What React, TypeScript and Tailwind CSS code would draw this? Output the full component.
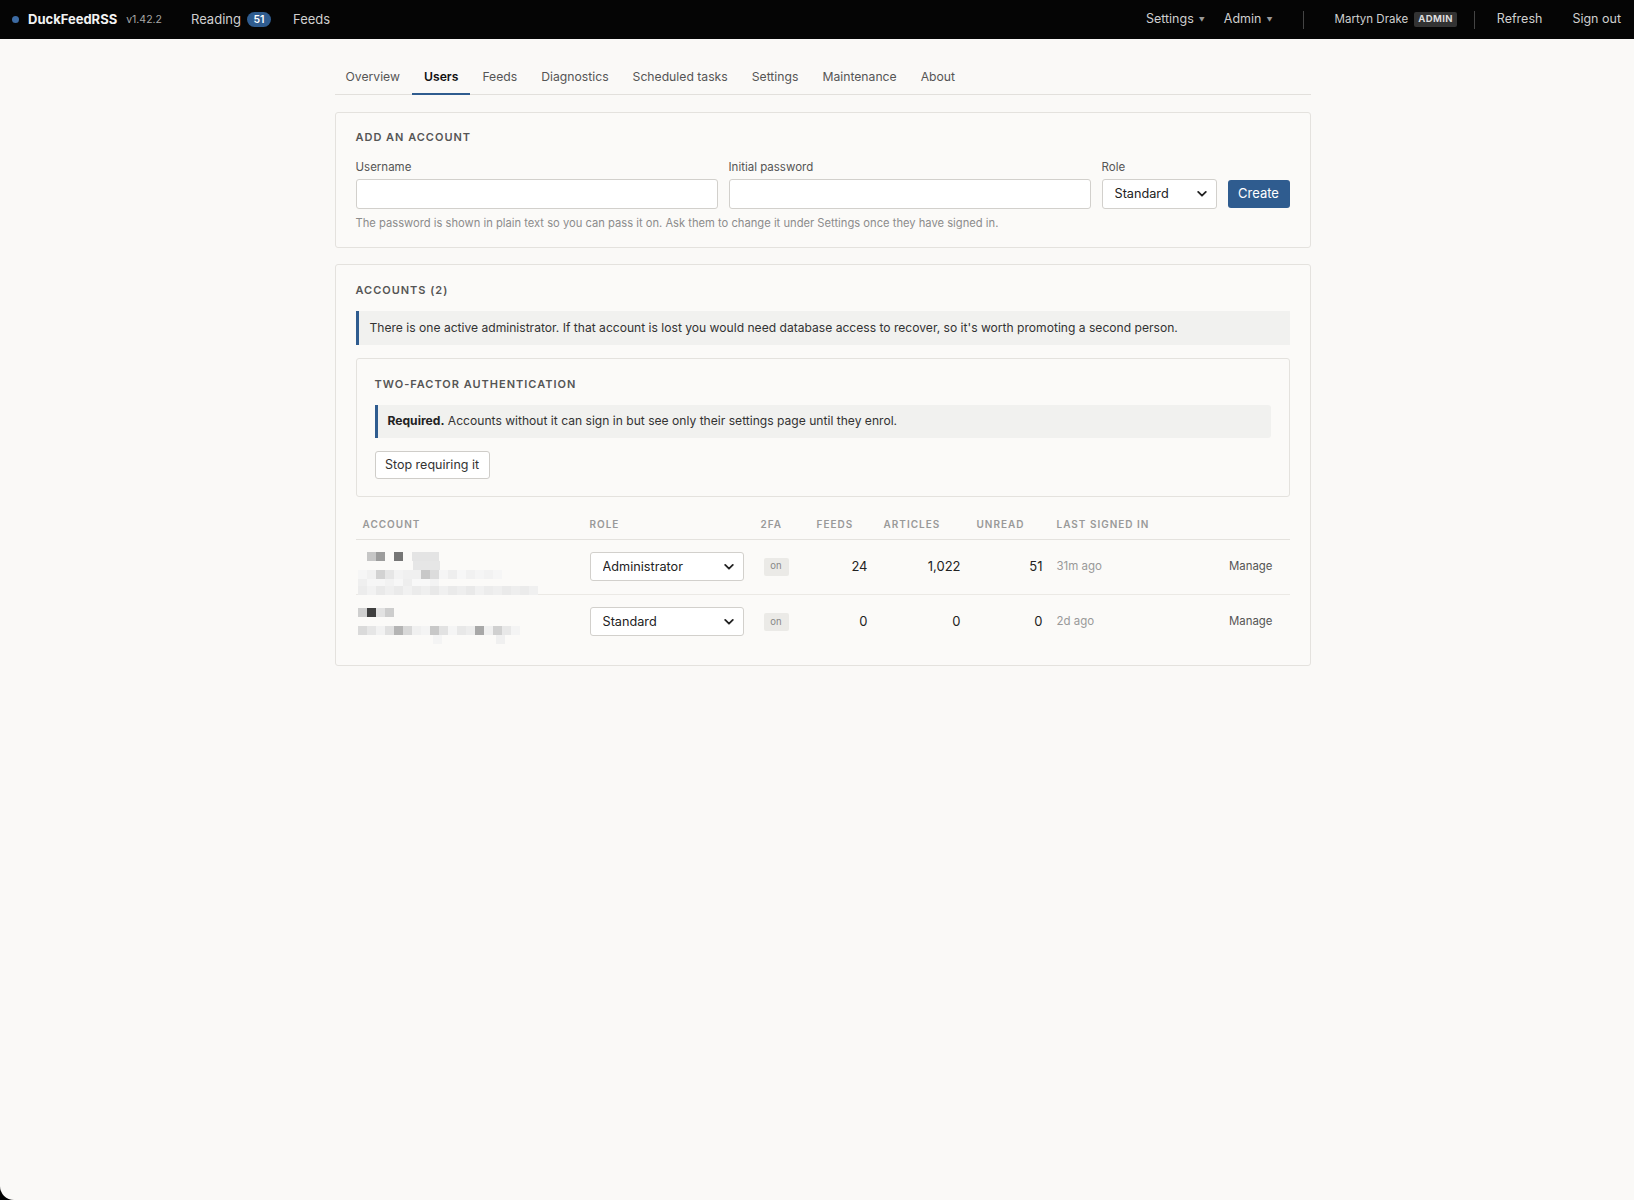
import React from "react";

const Chevron = () => (
  <svg width="10" height="7" viewBox="0 0 10 7" className="pointer-events-none absolute right-[10px] top-1/2 -translate-y-1/2">
    <path d="M1.2 1.4 L5 5.2 L8.8 1.4" fill="none" stroke="#222" strokeWidth="1.8" strokeLinecap="round" strokeLinejoin="round" />
  </svg>
);

const Select = ({ value, options, className }: { value: string; options: string[]; className: string }) => (
  <div className={"relative " + className}>
    <select
      defaultValue={value}
      className="h-full w-full appearance-none rounded-[3px] border border-[#d2d0cc] bg-white pl-[12px] pr-7 text-[12.7px] text-[#222] outline-none"
    >
      {options.map((o) => (
        <option key={o}>{o}</option>
      ))}
    </select>
    <Chevron />
  </div>
);

type Cell = [number, string];
const Mosaic = ({ lines }: { lines: { x: number; y: number; cells: Cell[] }[] }) => (
  <div className="relative h-full w-full">
    {lines.map((ln, i) => (
      <div key={i} className="absolute flex" style={{ left: ln.x, top: ln.y }}>
        {ln.cells.map(([w, c], j) => (
          <div key={j} style={{ width: w * 9, height: 9, background: c }} />
        ))}
      </div>
    ))}
  </div>
);

const row1Lines = [
  { x: 11, y: 12, cells: [[1, "#c6c6c6"], [1, "#9c9c9c"], [1, "transparent"], [1, "#767676"], [1, "transparent"], [3, "#e4e4e4"]] as Cell[] },
  { x: 57, y: 21, cells: [[3, "#e6e6e6"]] as Cell[] },
  { x: 2, y: 30, cells: [[1, "#f6f6f6"], [1, "#f1f1f1"], [1, "#d2d2d2"], [1, "#e6e6e6"], [1, "#f3f3f3"], [2, "#f0f0f0"], [1, "#c8c8c8"], [1, "#dcdcdc"], [1, "#f5f5f5"], [1, "#eeeeee"], [1, "#f7f7f7"], [1, "#f1f1f1"], [1, "#f5f5f5"], [1, "#f2f2f2"], [1, "#f6f6f6"]] as Cell[] },
  { x: 2, y: 39, cells: [[1, "#efefef"], [2, "#f6f6f6"], [1, "#f2f2f2"], [1, "#f7f7f7"], [1, "#eeeeee"], [2, "#f8f8f8"], [1, "#f3f3f3"]] as Cell[] },
  { x: 2, y: 46, cells: [[1, "#ececec"], [1, "#f2f2f2"], [1, "#e9e9e9"], [1, "#efefef"], [1, "#eaeaea"], [1, "#f1f1f1"], [1, "#ebebeb"], [1, "#efefef"], [1, "#e8e8e8"], [1, "#f0f0f0"], [1, "#eaeaea"], [1, "#eeeeee"], [1, "#e9e9e9"], [1, "#f1f1f1"], [1, "#ececec"], [1, "#efefef"], [1, "#eaeaea"], [1, "#eeeeee"], [1, "#ebebeb"], [1, "#f0f0f0"]] as Cell[] },
];

const row2Lines = [
  { x: 2, y: 13, cells: [[1, "#cfcfcf"], [1, "#3f3f3f"], [1, "#e2e2e2"], [1, "#cdcdcd"]] as Cell[] },
  { x: 2, y: 31, cells: [[1, "#dadada"], [1, "#e6e6e6"], [1, "#f2f2f2"], [1, "#e0e0e0"], [1, "#b4b4b4"], [1, "#d8d8d8"], [1, "#f0f0f0"], [1, "#f4f4f4"], [1, "#c8c8c8"], [1, "#e2e2e2"], [1, "#f5f5f5"], [1, "#e8e8e8"], [1, "#ededed"], [1, "#a8a8a8"], [1, "#f0f0f0"], [1, "#d0d0d0"], [1, "#e8e8e8"], [1, "#f4f4f4"]] as Cell[] },
  { x: 77, y: 40, cells: [[1, "#f4f4f4"], [6, "transparent"], [1, "#f0f0f0"]] as Cell[] },
];

const accounts = [
  { role: "Administrator", feeds: "24", articles: "1,022", unread: "51", last: "31m ago", lines: row1Lines },
  { role: "Standard", feeds: "0", articles: "0", unread: "0", last: "2d ago", lines: row2Lines },
];

export default function App() {
  const tabs = ["Overview", "Users", "Feeds", "Diagnostics", "Scheduled tasks", "Settings", "Maintenance", "About"];
  return (
    <div className="min-h-[1200px] bg-black font-['Inter','Liberation_Sans',sans-serif]">
      <div className="flex min-h-[1200px] flex-col rounded-bl-[14px] bg-[#faf9f7]">
        {/* Top bar */}
        <header className="flex h-[39px] items-center bg-[#050505] pl-[12px] pr-[13px] text-[#cfcfcf]">
          <span className="h-[7px] w-[7px] rounded-full bg-[#3d6ba3]" />
          <span className="ml-[9px] text-[13px] font-bold text-[#f2f2f2]">DuckFeedRSS</span>
          <span className="ml-[9px] text-[10.5px] text-[#a8a8a8]">v1.42.2</span>
          <span className="ml-[29px] text-[13px]">Reading</span>
          <span className="ml-[6px] flex h-[15px] items-center rounded-full bg-[#2f5c8f] px-[6.5px] text-[10.5px] font-semibold text-white">51</span>
          <span className="ml-[22px] text-[13px]">Feeds</span>
          <div className="ml-auto flex items-center text-[12.5px]">
            <span>Settings</span>
            <span className="ml-[5px] text-[6px] text-[#999]">▼</span>
            <span className="ml-[19px]">Admin</span>
            <span className="ml-[5px] text-[6px] text-[#999]">▼</span>
            <span className="ml-[30px] h-[18px] w-px bg-[#444]" />
            <span className="ml-[31px] text-[11.5px]">Martyn Drake</span>
            <span className="ml-[6px] flex h-[15px] items-center rounded-[2px] bg-[#333] px-[4px] text-[9.5px] font-bold tracking-[0.04em] text-[#ddd]">ADMIN</span>
            <span className="ml-[17px] h-[18px] w-px bg-[#444]" />
            <span className="ml-[22px]">Refresh</span>
            <span className="ml-[30px]">Sign out</span>
          </div>
        </header>

        <main className="mx-auto w-[987px] pl-[11px] pt-[20px]">
          {/* Tabs */}
          <nav className="flex border-b border-[#e2e0dc] text-[12.2px] leading-[16px] text-[#555]">
            {tabs.map((t) => (
              <span
                key={t}
                className={
                  "-mb-px border-b-2 px-[12px] pb-[8px] pt-[10px] first:pl-[11px] " +
                  (t === "Users" ? "border-[#2f5c8f] font-semibold text-[#111]" : "border-transparent")
                }
              >
                {t}
              </span>
            ))}
          </nav>

          {/* Add an account */}
          <section className="mt-[17px] rounded-[3px] border border-[#e4e2de] bg-[#fbfaf8] px-[20px] pb-[17px] pt-[17px]">
            <h2 className="text-[11px] font-semibold leading-[14px] tracking-[0.09em] text-[#555]">ADD AN ACCOUNT</h2>
            <div className="mt-[16px] flex items-end gap-[11px]">
              <label className="flex flex-1 flex-col">
                <span className="text-[11.5px] leading-[15px] text-[#555]">Username</span>
                <input className="mt-[4px] h-[30px] rounded-[3px] border border-[#d2d0cc] bg-white px-2 text-[13px] outline-none" />
              </label>
              <label className="flex flex-1 flex-col">
                <span className="text-[11.5px] leading-[15px] text-[#555]">Initial password</span>
                <input className="mt-[4px] h-[30px] rounded-[3px] border border-[#d2d0cc] bg-white px-2 text-[13px] outline-none" />
              </label>
              <label className="flex w-[115px] flex-col">
                <span className="text-[11.5px] leading-[15px] text-[#555]">Role</span>
                <Select value="Standard" options={["Standard", "Administrator"]} className="mt-[4px] h-[30px]" />
              </label>
              <button className="mb-px h-[28px] w-[62px] rounded-[3px] bg-[#2f5c8f] text-[13px] text-white">Create</button>
            </div>
            <p className="mt-[7px] text-[11.2px] leading-[14px] text-[#8c8c8c]">
              The password is shown in plain text so you can pass it on. Ask them to change it under Settings once they have signed in.
            </p>
          </section>

          {/* Accounts */}
          <section className="mt-[16px] rounded-[3px] border border-[#e4e2de] bg-[#fbfaf8] px-[20px] pb-[16px] pt-[18px]">
            <h2 className="text-[11px] font-semibold leading-[14px] tracking-[0.09em] text-[#555]">ACCOUNTS (2)</h2>
            <div className="mt-[14px] flex h-[34px] items-center border-l-[3px] border-[#2f5c8f] bg-[#f1f1ef] pl-[11px] text-[12.1px] text-[#333]">
              There is one active administrator. If that account is lost you would need database access to recover, so it's worth promoting a second person.
            </div>

            <div className="mt-[13px] rounded-[3px] border border-[#e4e2de] px-[18px] pb-[17px] pt-[18px]">
              <h3 className="text-[11px] font-semibold leading-[14px] tracking-[0.09em] text-[#555]">TWO-FACTOR AUTHENTICATION</h3>
              <div className="mt-[14px] flex h-[33px] items-center rounded-r-[3px] border-l-[3px] border-[#2f5c8f] bg-[#f1f1ef] pl-[10px] text-[12.1px] text-[#333]">
                <span className="font-bold text-[#222]">Required.</span>&nbsp;Accounts without it can sign in but see only their settings page until they enrol.
              </div>
              <button className="mt-[13px] h-[28px] w-[115px] rounded-[3px] border border-[#cfcdc9] bg-white text-[12.5px] text-[#333]">
                Stop requiring it
              </button>
            </div>

            <table className="mt-[13px] w-full table-fixed border-collapse">
              <colgroup>
                <col className="w-[227px]" />
                <col className="w-[171px]" />
                <col className="w-[56px]" />
                <col className="w-[65px]" />
                <col className="w-[93px]" />
                <col className="w-[82px]" />
                <col className="w-[130px]" />
                <col />
              </colgroup>
              <thead>
                <tr className="h-[29px] border-b border-[#e4e2de] text-left text-[10px] font-semibold tracking-[0.1em] text-[#999]">
                  <th className="pl-[7px] font-semibold">ACCOUNT</th>
                  <th className="pl-[7px] font-semibold">ROLE</th>
                  <th className="pl-[7px] font-semibold">2FA</th>
                  <th className="pl-[7px] font-semibold">FEEDS</th>
                  <th className="pl-[9px] font-semibold">ARTICLES</th>
                  <th className="pl-[9px] font-semibold">UNREAD</th>
                  <th className="pl-[7px] font-semibold">LAST SIGNED IN</th>
                  <th />
                </tr>
              </thead>
              <tbody>
                {accounts.map((a, i) => (
                  <tr key={i} className={i === 0 ? "h-[55px] border-b border-[#ebe9e5]" : "h-[55px]"}>
                    <td className="h-[55px] p-0 align-top">
                      <Mosaic lines={a.lines} />
                    </td>
                    <td className="pl-[7px]">
                      <Select value={a.role} options={["Administrator", "Standard"]} className="h-[29px] w-[154px]" />
                    </td>
                    <td className="pl-[10px]">
                      <div className="flex h-[18px] w-[25px] items-center justify-center rounded-[2px] bg-[#ebeae7] text-[9.5px] text-[#888]">on</div>
                    </td>
                    <td className="pr-[7px] text-right text-[13px] text-[#222]">{a.feeds}</td>
                    <td className="pr-[7px] text-right text-[13px] text-[#222]">{a.articles}</td>
                    <td className="pr-[7px] text-right text-[13px] text-[#222]">{a.unread}</td>
                    <td className="pl-[7px] text-[11.5px] text-[#999]">{a.last}</td>
                    <td className="pr-[17px] text-right text-[11.4px] text-[#555]">Manage</td>
                  </tr>
                ))}
              </tbody>
            </table>
          </section>
        </main>
      </div>
    </div>
  );
}
